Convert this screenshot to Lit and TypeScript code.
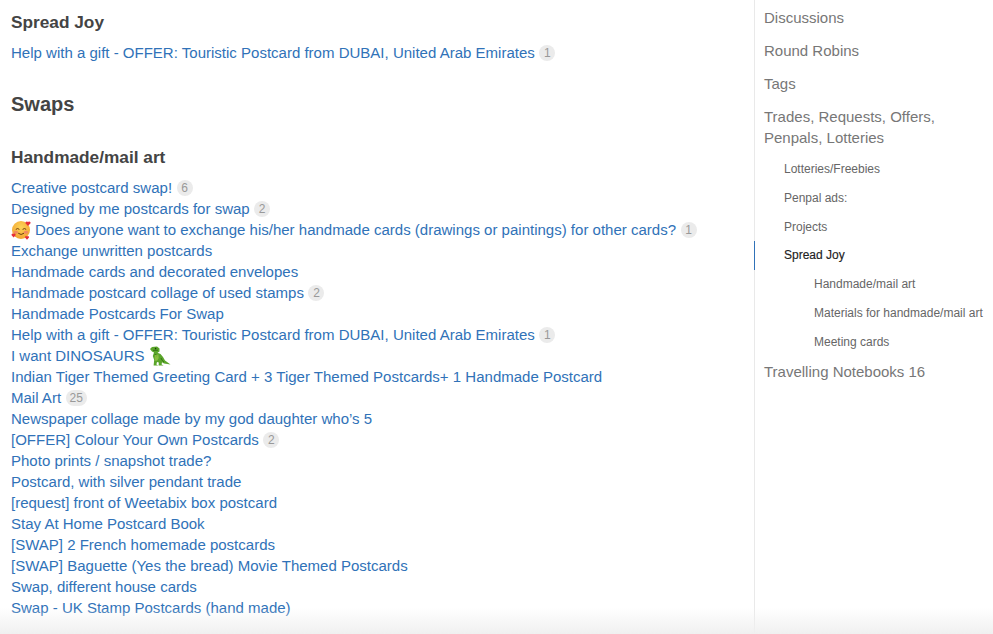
import { LitElement, html, css, svg } from "lit";
import { customElement } from "lit/decorators.js";

const blush = svg`<svg class="emo" viewBox="0 0 20 20" width="20" height="20">
  <defs><radialGradient id="f" cx=".5" cy=".35" r=".7"><stop offset="0" stop-color="#fcd45a"/><stop offset="1" stop-color="#f2a02c"/></radialGradient></defs>
  <circle cx="10" cy="10" r="9" fill="url(#f)"/>
  <ellipse cx="4.8" cy="12.2" rx="2.3" ry="1.5" fill="#f08a5e"/><ellipse cx="15" cy="12.2" rx="2.3" ry="1.5" fill="#f08a5e"/>
  <path d="M4.8 9.4q1.9-1.7 3.6 0M11.6 9.4q1.9-1.7 3.6 0M7.2 13.2q2.9 2.6 5.8 0" fill="none" stroke="#6b3d12" stroke-width="1"/>
  <path d="M17 6l-2.3-2.4a1.35 1.35 0 0 1 2.3-1.5 1.35 1.35 0 0 1 2.3 1.5z" fill="#e62f3a"/>
  <path d="M2.6 17.4L.6 15.2a1.2 1.2 0 0 1 2-1.2 1.2 1.2 0 0 1 2 1.2z" fill="#e62f3a"/>
  <path d="M16 19.8l-2-2.2a1.2 1.2 0 0 1 2-1.2 1.2 1.2 0 0 1 2 1.2z" fill="#e62f3a"/>
</svg>`;

const dino = svg`<svg class="emo" viewBox="0 0 22 20" width="22" height="20">
  <path d="M1 3 L3 1 L8 .6 L10.5 2.5 L10.5 5.5 L8.5 6.8 L11.5 8 L14 11 L16 14.5 L21.5 18.6 L15 17.4 L13 16.2 L12.6 18.4 L14.6 19.6 L9.6 19.6 L9.8 16.4 L8 16 L7.4 18.4 L9.2 19.6 L4.6 19.6 L5.2 14 L3.8 10 L5 6.6 L3 5.6z" fill="#5aa52a"/>
  <path d="M5.6 8.4l2.6 1-1.4 1.8M12 12q1 3 3 4M4 4.4l5-.2" fill="none" stroke="#2f6d14" stroke-width=".9"/>
  <path d="M6 9q-1 3 .4 6l2-.4q2-3 1-6z" fill="#9ccb4a" opacity=".7"/>
  <circle cx="6.6" cy="2.6" r=".8" fill="#17380a"/>
</svg>`;

type Row = { t: string; n?: number; pre?: unknown; post?: unknown };

const rows: Row[] = [
  { t: "Creative postcard swap!", n: 6 },
  { t: "Designed by me postcards for swap", n: 2 },
  { t: "Does anyone want to exchange his/her handmade cards (drawings or paintings) for other cards?", n: 1, pre: blush },
  { t: "Exchange unwritten postcards" },
  { t: "Handmade cards and decorated envelopes" },
  { t: "Handmade postcard collage of used stamps", n: 2 },
  { t: "Handmade Postcards For Swap" },
  { t: "Help with a gift - OFFER: Touristic Postcard from DUBAI, United Arab Emirates", n: 1 },
  { t: "I want DINOSAURS", post: dino },
  { t: "Indian Tiger Themed Greeting Card + 3 Tiger Themed Postcards+ 1 Handmade Postcard" },
  { t: "Mail Art", n: 25 },
  { t: "Newspaper collage made by my god daughter who’s 5" },
  { t: "[OFFER] Colour Your Own Postcards", n: 2 },
  { t: "Photo prints / snapshot trade?" },
  { t: "Postcard, with silver pendant trade" },
  { t: "[request] front of Weetabix box postcard" },
  { t: "Stay At Home Postcard Book" },
  { t: "[SWAP] 2 French homemade postcards" },
  { t: "[SWAP] Baguette (Yes the bread) Movie Themed Postcards" },
  { t: "Swap, different house cards" },
  { t: "Swap - UK Stamp Postcards (hand made)" },
];

@customElement("app-root")
export class AppRoot extends LitElement {
  static styles = css`
    :host {
      display: block;
      height: 634px;
      overflow: hidden;
      position: relative;
      background: #fff;
      font-family: "Liberation Sans", Arial, sans-serif;
      -webkit-font-smoothing: antialiased;
    }
    .page { display: flex; height: 634px; }
    main { width: 754px; padding: 12px 0 0 11px; box-sizing: border-box; }
    h2, h3 { margin: 0; color: #444; font-weight: 700; }
    h3 { font-size: 17.25px; line-height: 21px; }
    h2 { font-size: 20px; line-height: 24px; margin: 29px 0 0; }
    .h-sub { margin: 31px 0 9px; }
    .h-top { margin: 0 0 9px; }
    .row { display: flex; align-items: center; height: 21px; white-space: nowrap; }
    a { color: #3072b8; font-size: 15.03px; text-decoration: none; line-height: 21px; }
    .n {
      margin-left: 4.5px; min-width: 8px; height: 16px; padding: 0 4px; border-radius: 8px;
      background: #ebebeb; color: #999; font-size: 12px; line-height: 16px; text-align: center;
    }
    .emo { display: block; flex: none; }
    .pre { margin: 0 4px 0 0; }
    .post { margin-left: 4px; }
    aside {
      width: 239px; box-sizing: border-box; border-left: 1px solid #e9e9e9;
      display: flex; flex-direction: column;
    }
    .t { color: #777; font-size: 15px; line-height: 21px; padding: 7px 9px 5px; }
    .s, .d { color: #666; font-size: 12px; line-height: 17px; padding: 6px 0; height: 17px; white-space: nowrap; }
    .s { padding-left: 29px; }
    .d { padding-left: 59px; }
    .first { margin-top: 2px; }
    .on { color: #222; border-left: 1px solid #3072b8; margin: -1px 0 0 -1px; -webkit-text-stroke: .15px #222; }
    .last { margin-top: -3px; }
    .fade {
      position: absolute; left: 0; right: 0; bottom: 0; height: 26px; pointer-events: none;
      background: linear-gradient(to bottom, rgba(240,240,240,0), rgba(240,240,240,1));
    }
  `;

  render() {
    return html`<div class="page">
        <main>
          <h3 class="h-top">Spread Joy</h3>
          <div class="row"><a href="#">Help with a gift - OFFER: Touristic Postcard from DUBAI, United Arab Emirates</a><span class="n">1</span></div>
          <h2>Swaps</h2>
          <h3 class="h-sub">Handmade/mail art</h3>
          ${rows.map(
            (r) => html`<div class="row">
              ${r.pre ? html`<span class="pre">${r.pre}</span>` : ""}
              <a href="#">${r.t}</a>
              ${r.post ? html`<span class="post">${r.post}</span>` : ""}
              ${r.n ? html`<span class="n">${r.n}</span>` : ""}
            </div>`
          )}
        </main>
        <aside>
          <div class="t">Discussions</div>
          <div class="t">Round Robins</div>
          <div class="t">Tags</div>
          <div class="t">Trades, Requests, Offers,<br />Penpals, Lotteries</div>
          <div class="s first">Lotteries/Freebies</div>
          <div class="s">Penpal ads:</div>
          <div class="s">Projects</div>
          <div class="s on">Spread Joy</div>
          <div class="d">Handmade/mail art</div>
          <div class="d">Materials for handmade/mail art</div>
          <div class="d">Meeting cards</div>
          <div class="t last">Travelling Notebooks 16</div>
        </aside>
      </div>
      <div class="fade"></div>`;
  }
}
